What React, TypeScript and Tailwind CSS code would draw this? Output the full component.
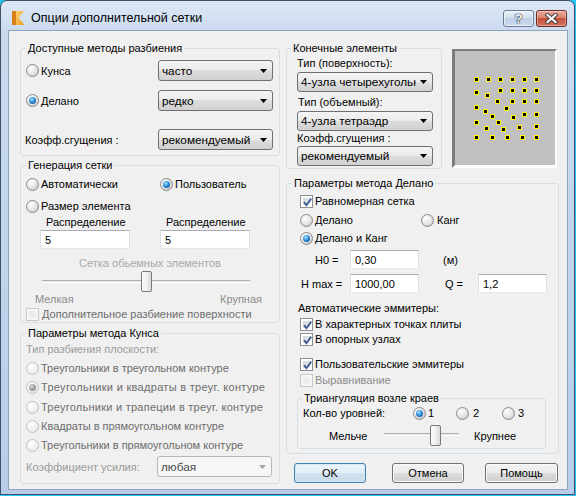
import React from "react";

type RP = { checked?: boolean; disabled?: boolean };

function Radio({ checked = false, disabled = false }: RP) {
  const ring = disabled
    ? "border-[#c0c0c0] bg-[radial-gradient(circle_at_35%_30%,#ffffff_0%,#f2f2f2_50%,#e3e3e3_100%)]"
    : "border-[#8a8a8a] bg-[radial-gradient(circle_at_35%_30%,#ffffff_0%,#e6e6e6_50%,#bdbdbd_100%)]";
  const dot = disabled
    ? "bg-[radial-gradient(circle_at_40%_35%,#d6d6d6_0%,#959595_60%,#7a7a7a_100%)]"
    : "bg-[radial-gradient(circle_at_40%_35%,#a6e4ff_0%,#2f8fd8_45%,#0b3f80_100%)]";
  return (
    <span className={`inline-flex w-[13px] h-[13px] shrink-0 rounded-full border items-center justify-center ${ring}`}>
      {checked && <span className={`w-[7px] h-[7px] rounded-full ${dot}`} />}
    </span>
  );
}

function Check({ checked = false, disabled = false }: RP) {
  return (
    <span
      className={`relative inline-flex w-[13px] h-[13px] shrink-0 border p-[2px] ${
        disabled ? "border-[#c8c8c8] bg-[#f6f6f6]" : "border-[#8e8f8f] bg-white"
      }`}
    >
      <span
        className={`w-full h-full ${
          disabled ? "bg-[#ededed]" : "bg-[linear-gradient(135deg,#cdd2d8_0%,#f7f7f7_100%)]"
        }`}
      />
      {checked && (
        <svg className="absolute left-[1px] top-[1px]" width="11" height="11" viewBox="0 0 11 11">
          <path d="M2 5.2L4.4 8.2L9.2 1.6" fill="none" stroke="#3d5c92" strokeWidth="1.9" />
        </svg>
      )}
    </span>
  );
}

function Combo({
  children,
  className = "",
  disabled = false,
}: {
  children: React.ReactNode;
  className?: string;
  disabled?: boolean;
}) {
  return (
    <div
      className={`flex items-center shrink-0 rounded-[3px] border pl-[3px] pr-[5px] text-[11.75px] ${
        disabled
          ? "border-[#b5b9bc] bg-[#f6f6f6] text-[#4a4a4a]"
          : "border-[#707070] bg-[linear-gradient(180deg,#f3f3f3_0%,#ebebeb_50%,#dedede_50%,#d0d0d0_100%)]"
      } ${className}`}
    >
      <span className="flex-1 overflow-hidden whitespace-nowrap">{children}</span>
      <svg width="7" height="4" viewBox="0 0 7 4" className="ml-[4px] shrink-0">
        <path d="M0 0H7L3.5 4Z" fill={disabled ? "#a8a8a8" : "#000"} />
      </svg>
    </div>
  );
}

function Field({ children, className = "" }: { children: React.ReactNode; className?: string }) {
  return (
    <div
      className={`flex items-center shrink-0 bg-white border border-t-[#abadb3] border-l-[#dbdfe6] border-r-[#dbdfe6] border-b-[#e3e9ef] pl-[4px] ${className}`}
    >
      {children}
    </div>
  );
}

function Btn({ children, className = "", def = false }: { children: React.ReactNode; className?: string; def?: boolean }) {
  return (
    <div
      className={`flex items-center justify-center shrink-0 h-[20px] rounded-[3px] border ${
        def
          ? "border-[#3c7fb1] bg-[linear-gradient(180deg,#edf4f9_0%,#e3eef5_50%,#d2e3ee_50%,#c6dae8_100%)] shadow-[inset_0_0_0_1px_#d4ecf9]"
          : "border-[#707070] bg-[linear-gradient(180deg,#f2f2f2_0%,#ebebeb_50%,#dddddd_50%,#cfcfcf_100%)] shadow-[inset_0_0_0_1px_#fbfbfb]"
      } ${className}`}
    >
      {children}
    </div>
  );
}

function Thumb({ className = "" }: { className?: string }) {
  return (
    <span
      className={`absolute top-0 w-[11px] h-[21px] rounded-[2px] border border-[#7a7a7a] bg-[linear-gradient(90deg,#fbfbfb_0%,#f0f0f0_50%,#d9d9d9_100%)] ${className}`}
    />
  );
}

function Group({
  title,
  className = "",
  legend = "ml-[5px]",
  children,
}: {
  title: string;
  className?: string;
  legend?: string;
  children?: React.ReactNode;
}) {
  return (
    <fieldset className={`border border-[#d5dfe5] rounded-[3px] shrink-0 min-w-0 ${className}`}>
      <legend className={`px-[2px] leading-[14px] ${legend}`}>{title}</legend>
      {children}
    </fieldset>
  );
}

const dots: [number, number][] = [
  [21, 28], [33, 28], [45, 28], [57, 28], [69, 28], [81, 28],
  [45, 39], [57, 39], [69, 39], [81, 39],
  [21, 41], [32, 44],
  [42, 50], [57, 50], [69, 50], [81, 50],
  [21, 56], [51, 57], [30, 60], [69, 63], [81, 63], [37, 65], [58, 66],
  [21, 71], [43, 71], [31, 77], [48, 78], [64, 76], [81, 75],
  [21, 86], [37, 86], [52, 86], [67, 86], [81, 86],
];

function AppIcon() {
  return (
    <svg width="16" height="16" viewBox="0 0 16 16" className="shrink-0">
      <defs>
        <linearGradient id="ig" x1="0" y1="0" x2="1" y2="1">
          <stop offset="0" stopColor="#ffd070" />
          <stop offset="1" stopColor="#f09a20" />
        </linearGradient>
      </defs>
      <rect x="2" y="1" width="4" height="14" fill="#d9801a" />
      <path d="M6 1H14L8.5 7.5L14.5 15H6Z" fill="url(#ig)" />
    </svg>
  );
}

export default function App() {
  return (
    <div className="w-[576px] h-[496px] bg-[#27c3f2] overflow-hidden text-[11px] leading-[14px] text-black font-['Liberation_Sans',Arial,sans-serif]">
      <div className="w-[575px] h-[495px] border border-[#3f5168] rounded-t-[7px] bg-[linear-gradient(180deg,#dde8f5_0px,#cbdbee_30px,#b7cde9_100%)] flex flex-col">
        {/* Title bar */}
        <div className="h-[29px] shrink-0 flex items-start pt-[9px] pl-[9px] pr-[7px]">
          <AppIcon />
          <span className="ml-[5px] text-[12.5px] leading-[16px] flex-1">Опции дополнительной сетки</span>
          <div className="w-[31px] h-[17px] rounded-[3px] border border-[#6a7d96] bg-[linear-gradient(180deg,#e9f0f8_0%,#d5e1ef_45%,#bdd0e7_50%,#cadbee_100%)] flex items-center justify-center shadow-[inset_0_0_0_1px_rgba(255,255,255,0.6)]">
            <span className="text-white font-bold text-[13px] leading-[13px] [text-shadow:0_0_1px_#2b3445,0_0_1px_#2b3445,0_0_1px_#2b3445,0_0_1px_#2b3445]">
              ?
            </span>
          </div>
          <div className="ml-[2px] w-[31px] h-[17px] rounded-[3px] border border-[#6b2a22] bg-[linear-gradient(180deg,#e9a99b_0%,#d9826f_45%,#c5503b_50%,#d4735e_100%)] flex items-center justify-center shadow-[inset_0_0_0_1px_rgba(255,255,255,0.35)]">
            <svg width="13" height="11" viewBox="0 0 13 11">
              <path d="M2.5 2L10.5 9M10.5 2L2.5 9" stroke="#3b3b3b" strokeWidth="4" strokeLinecap="square" />
              <path d="M2.5 2L10.5 9M10.5 2L2.5 9" stroke="#fff" strokeWidth="2.2" strokeLinecap="square" />
            </svg>
          </div>
        </div>

        {/* Content */}
        <div className="ml-[7px] w-[560px] h-[460px] shrink-0 border border-[#8ea2bc] bg-[#f0f0f0] flex pl-[11px] pt-[10px]">
          {/* Left column */}
          <div className="w-[260px] flex flex-col shrink-0">
            <Group title="Доступные методы разбиения" className="w-[260px] h-[115px]">
              <div className="flex items-center h-[21px] mt-[5px] pl-[5px]">
                <div className="w-[132px] flex items-center">
                  <Radio />
                  <span className="ml-[2px]">Кунса</span>
                </div>
                <Combo className="w-[115px] h-[21px]">часто</Combo>
              </div>
              <div className="flex items-center h-[21px] mt-[9px] pl-[5px]">
                <div className="w-[132px] flex items-center">
                  <Radio checked />
                  <span className="ml-[2px]">Делано</span>
                </div>
                <Combo className="w-[115px] h-[21px]">редко</Combo>
              </div>
              <div className="flex items-center h-[21px] mt-[18px] pl-[4px]">
                <span className="w-[133px]">Коэфф.сгущения :</span>
                <Combo className="w-[115px] h-[21px]">рекомендуемый</Combo>
              </div>
            </Group>

            <Group title="Генерация сетки" className="w-[260px] h-[165px] mt-[2px]">
              <div className="flex items-center h-[16px] mt-[4px] pl-[5px]">
                <div className="w-[134px] flex items-center">
                  <Radio />
                  <span className="ml-[2px]">Автоматически</span>
                </div>
                <Radio checked />
                <span className="ml-[2px]">Пользователь</span>
              </div>
              <div className="flex items-center h-[16px] mt-[6px] pl-[5px]">
                <Radio />
                <span className="ml-[2px]">Размер элемента</span>
              </div>
              <div className="flex h-[14px] mt-[1px] pl-[25px]">
                <span className="w-[120px]">Распределение</span>
                <span>Распределение</span>
              </div>
              <div className="flex h-[19px] mt-[1px] pl-[19px]">
                <Field className="w-[90px] h-[19px]">5</Field>
                <Field className="w-[90px] h-[19px] ml-[30px]">5</Field>
              </div>
              <div className="h-[14px] mt-[7px] text-center text-[#a8a8a8]">Сетка обьемных элементов</div>
              <div className="h-[21px] mt-[1px] pl-[21px]">
                <div className="relative w-[208px] h-[21px]">
                  <div className="absolute left-0 right-0 top-[9px] h-[3px] border-t border-t-[#b0b0b0] border-b border-b-[#ffffff] bg-[#e6e6e6]" />
                  <Thumb className="left-[99px]" />
                </div>
              </div>
              <div className="flex justify-between h-[14px] mt-[0px] pl-[14px] pr-[17px] text-[#8c8c8c]">
                <span>Мелкая</span>
                <span>Крупная</span>
              </div>
              <div className="flex items-center h-[14px] mt-[1px] pl-[5px] text-[#6d6d6d]">
                <Check disabled />
                <span className="ml-[3px]">Дополнительное разбиение поверхности</span>
              </div>
            </Group>

            <Group title="Параметры метода Кунса" className="w-[260px] h-[158px] mt-[3px]">
              <div className="h-[14px] mt-[2px] pl-[5px] text-[#9a9a9a]">Тип разбиения плоскости:</div>
              <div className="flex items-center h-[14px] mt-[5px] pl-[5px] text-[#6d6d6d]">
                <Radio disabled />
                <span className="ml-[2px]">Треугольники в треугольном контуре</span>
              </div>
              <div className="flex items-center h-[14px] mt-[5px] pl-[5px] text-[#6d6d6d]">
                <Radio disabled checked />
                <span className="ml-[2px] tracking-[0.3px]">Треугольники и квадраты в треуг. контуре</span>
              </div>
              <div className="flex items-center h-[14px] mt-[6px] pl-[5px] text-[#6d6d6d]">
                <Radio disabled />
                <span className="ml-[2px] tracking-[0.25px]">Треугольники и трапеции в треуг. контуре</span>
              </div>
              <div className="flex items-center h-[14px] mt-[5px] pl-[5px] text-[#6d6d6d]">
                <Radio disabled />
                <span className="ml-[2px]">Квадраты в прямоугольном контуре</span>
              </div>
              <div className="flex items-center h-[14px] mt-[5px] pl-[5px] text-[#6d6d6d]">
                <Radio disabled />
                <span className="ml-[2px]">Треугольники в прямоугольном контуре</span>
              </div>
              <div className="flex items-center h-[21px] mt-[4px] pl-[5px]">
                <span className="w-[131px] text-[#9a9a9a]">Коэффициент усилия:</span>
                <Combo disabled className="w-[115px] h-[21px]">
                  любая
                </Combo>
              </div>
            </Group>
          </div>

          {/* Right column */}
          <div className="w-[273px] ml-[6px] flex flex-col shrink-0">
            <div className="flex h-[128px] shrink-0">
              <Group title="Конечные элементы" legend="ml-[4px]" className="w-[156px] h-[128px]">
                <div className="h-[14px] mt-[1px] pl-[10px]">Тип (поверхность):</div>
                <Combo className="w-[136px] h-[20px] mt-[2px] ml-[10px]">4-узла четырехугольник</Combo>
                <div className="h-[14px] mt-[3px] pl-[11px]">Тип (объемный):</div>
                <Combo className="w-[136px] h-[20px] mt-[2px] ml-[10px]">4-узла тетраэдр</Combo>
                <div className="h-[14px] mt-[0px] pl-[10px]">Коэфф.сгущения :</div>
                <Combo className="w-[136px] h-[20px] mt-[1px] ml-[10px]">рекомендуемый</Combo>
              </Group>
              <div className="ml-[10px] mt-[8px] w-[105px] h-[119px] shrink-0 border-l-[3px] border-t-[2px] border-r-[2px] border-b-[3px] border-l-[#7c7c7c] border-t-[#7c7c7c] border-r-[#ffffff] border-b-[#ffffff] bg-[#c0c0c0] relative">
                {dots.map(([x, y], i) => (
                  <span
                    key={i}
                    className="absolute w-[5px] h-[5px] bg-[#ffff00] flex items-center justify-center"
                    style={{ left: x - 2, top: y - 2 }}
                  >
                    <span className="w-[3px] h-[3px] bg-black" />
                  </span>
                ))}
              </div>
            </div>

            <Group title="Параметры метода Делано" className="w-[273px] h-[278px] mt-[7px]">
              <div className="flex items-center h-[14px] mt-[4px] pl-[13px]">
                <Check checked />
                <span className="ml-[2px]">Равномерная сетка</span>
              </div>
              <div className="flex items-center h-[14px] mt-[5px] pl-[13px]">
                <div className="w-[121px] flex items-center">
                  <Radio />
                  <span className="ml-[2px]">Делано</span>
                </div>
                <Radio />
                <span className="ml-[3px]">Канг</span>
              </div>
              <div className="flex items-center h-[14px] mt-[4px] pl-[13px]">
                <Radio checked />
                <span className="ml-[2px]">Делано и Канг</span>
              </div>
              <div className="flex items-center h-[19px] mt-[5px] pl-[28px]">
                <span className="w-[35px]">H0 =</span>
                <Field className="w-[69px] h-[19px]">0,30</Field>
                <span className="ml-[24px]">(м)</span>
              </div>
              <div className="flex items-center h-[19px] mt-[5px] pl-[14px]">
                <span className="w-[49px]">H max =</span>
                <Field className="w-[69px] h-[19px]">1000,00</Field>
                <span className="ml-[26px] w-[33px]">Q =</span>
                <Field className="w-[69px] h-[19px]">1,2</Field>
              </div>
              <div className="h-[14px] mt-[8px] pl-[11px]">Автоматические эммитеры:</div>
              <div className="flex items-center h-[14px] mt-[2px] pl-[13px]">
                <Check checked />
                <span className="ml-[2px]">В характерных точках плиты</span>
              </div>
              <div className="flex items-center h-[14px] mt-[1px] pl-[13px]">
                <Check checked />
                <span className="ml-[2px]">В опорных узлах</span>
              </div>
              <div className="flex items-center h-[14px] mt-[11px] pl-[13px]">
                <Check checked />
                <span className="ml-[2px]">Пользовательские эммитеры</span>
              </div>
              <div className="flex items-center h-[14px] mt-[2px] pl-[13px] text-[#8c8c8c]">
                <Check disabled />
                <span className="ml-[2px]">Выравнивание</span>
              </div>
              <Group title="Триангуляция возле краев" legend="ml-[4px]" className="w-[249px] h-[58px] mt-[4px] ml-[10px]">
                <div className="flex items-center h-[14px] mt-[1px] pl-[5px]">
                  <span className="w-[110px]">Кол-во уровней:</span>
                  <div className="w-[43px] flex items-center">
                    <Radio checked />
                    <span className="ml-[2px]">1</span>
                  </div>
                  <div className="w-[46px] flex items-center">
                    <Radio />
                    <span className="ml-[4px]">2</span>
                  </div>
                  <div className="flex items-center">
                    <Radio />
                    <span className="ml-[3px]">3</span>
                  </div>
                </div>
                <div className="flex items-center h-[21px] mt-[5px] pl-[31px]">
                  <span className="w-[55px]">Мельче</span>
                  <div className="relative w-[75px] h-[21px]">
                    <div className="absolute left-0 right-0 top-[8px] h-[3px] border-t border-t-[#b0b0b0] border-b border-b-[#ffffff] bg-[#e6e6e6]" />
                    <Thumb className="left-[46px]" />
                  </div>
                  <span className="ml-[15px]">Крупнее</span>
                </div>
              </Group>
            </Group>

            <div className="flex h-[20px] mt-[9px] pl-[8px] shrink-0">
              <Btn def className="w-[72px]">
                OK
              </Btn>
              <Btn className="w-[72px] ml-[26px]">Отмена</Btn>
              <Btn className="w-[73px] ml-[21px]">Помощь</Btn>
            </div>
          </div>
        </div>
      </div>
    </div>
  );
}
